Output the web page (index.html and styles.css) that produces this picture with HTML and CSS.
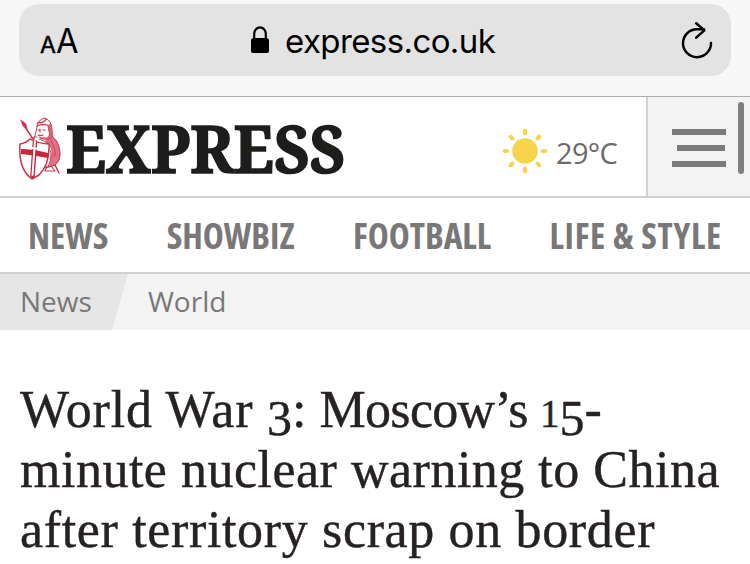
FILE: index.html
```html
<!DOCTYPE html>
<html lang="en">
<head>
<meta charset="utf-8">
<title>Express</title>
<link rel="stylesheet" href="styles.css">
</head>
<body>
<div class="browser">
  <div class="address">
    <span class="reader"><span class="reader-small">A</span><span class="reader-big">A</span></span>
    <div class="site">
      <svg class="lock" width="20" height="28" viewBox="0 0 20 28"><path d="M4.2 14V8a5.8 6.6 0 0 1 11.6 0v6" fill="none" stroke="#000" stroke-width="2.2"/><rect x="1" y="12" width="18" height="15" rx="2.6"/></svg>
      <span class="host">express.co.uk</span>
    </div>
    <svg class="reload" width="34" height="40" viewBox="0 0 34 40" fill="none" stroke="#000" stroke-width="2.5" stroke-linecap="round" stroke-linejoin="round"><path d="M31 23A14 14 0 1 1 17 9.2h7M16.2 3.2l8.2 7.2-8.2 7.2"/></svg>
  </div>
</div>
<header class="header">
  <div class="brand">
    <svg class="crusader" width="42" height="64" viewBox="0 0 42 64" fill="none" stroke="#c8364b" stroke-linecap="round" stroke-linejoin="round">
      <path d="M2 3l5 4 1 5-4-3z" fill="#c8364b" stroke-width=".6"/>
      <path d="M6 10l8 12M34 44l6 12" stroke-width="1.5"/>
      <path d="M18 10q0-7 8-9 7 3 6 10l1 8q6 5 7 12c2 9 0 14-4 17l-9 3-12-28z" fill="#fff" stroke-width="1"/>
      <path d="M27 2q-1 4-9 4M18 9q5-2 11-1l2 11M19 13h2m3 0h2M21 12v3M19 18q3 1 5 0" stroke-width="1.1"/>
      <path d="M29 9l2 8-3 4-8-1 2 2 8 1 4-4-1-8-1-4z" fill="#dc6678" stroke-width=".5"/>
      <path d="M34 20q7 7 7 16 0 8-5 12l-7 2 3-8q3-8-2-15l-3-3z" fill="#dc7484" stroke-width=".8"/>
      <path d="M18 20q-5-1-6 4m8-2 9 4M32 24q5 7 4 15M29 31q5 3 2 12" stroke-width=".9"/>
      <path d="M28 49l-2 5h10l-4-5" stroke-width="1.1"/>
      <path d="M1 27q6-1 10-5 6 4 19 5 1 20-10 31l-7 4Q-1 52 1 27z" fill="#fff" stroke-width="1.5"/>
      <path d="M2 32q12 0 27 4v5Q14 38 2 37z" fill="#c8283f" stroke="none"/>
      <path d="M16 25l-2.500 34" stroke="#c8283f" stroke-width="4.600"/>
      <path d="M16 24l-2.500 34M12 31l8 .8" stroke="#fff" stroke-width="2"/>
    </svg>
    <svg class="wordmark" width="278" height="56" viewBox="0 0 278 56"><text x="-1" y="51" textLength="279" lengthAdjust="spacingAndGlyphs">EXPRESS</text></svg>
  </div>
  <div class="weather">
    <svg width="46" height="46" viewBox="-23 -23 46 46" fill="#f7d44c">
      <circle r="12.8"/>
      <g><ellipse cy="-19" rx="2.2" ry="3.4"/><ellipse cy="19" rx="2.2" ry="3.4"/><ellipse cx="-19" rx="3.4" ry="2"/><ellipse cx="19" rx="3.4" ry="2"/></g>
      <g transform="rotate(45)"><ellipse cy="-19" rx="2.2" ry="3.4"/><ellipse cy="19" rx="2.2" ry="3.4"/><ellipse cx="-19" rx="3.4" ry="2"/><ellipse cx="19" rx="3.4" ry="2"/></g>
    </svg>
    <span class="temp">29°C</span>
  </div>
  <div class="menu"><i class="bar"></i><i class="bar bar-mid"></i><i class="bar"></i></div>
  <div class="scroll"></div>
</header>
<nav class="nav">
  <a>NEWS</a><a>SHOWBIZ</a><a>FOOTBALL</a><a class="wide">LIFE &amp; STYLE</a>
</nav>
<div class="crumbs"><span class="crumb-first">News</span><span class="crumb">World</span></div>
<h1 class="headline">
  <span class="line l1"><span class="lead">World War </span><span class="old">3</span>: <span class="tight">Moscow’s </span><span class="one">1</span><span class="old">5</span>-</span>
  <span class="line l2">minute nuclear warning to China</span>
  <span class="line l3">after territory scrap on border</span>
</h1>
</body>
</html>
```
FILE: styles.css
```css
* { box-sizing: border-box; }
body { margin: 0; width: 750px; height: 564px; overflow: hidden; background: #fff; font-family: "Open Sans", sans-serif; color: #797777; }
.browser { height: 97px; padding: 4px 19px 0; background: #f7f7f7; border-bottom: 1px solid #aeaeae; }
.address { display: flex; align-items: center; height: 72px; padding: 0 17px 0 21px; border-radius: 20px; background: #e3e3e3; color: #000; font-family: Inter, sans-serif; }
.reader { display: flex; align-items: baseline; width: 210px; padding-top: 1px; }
.reader-small { font-size: 23px; -webkit-text-stroke: 0.5px #000; }
.reader-big { font-size: 34px; letter-spacing: -1px; transform: scaleX(0.96); transform-origin: left; }
.site { display: flex; align-items: center; gap: 15px; }
.host { font-size: 33px; letter-spacing: -0.6px; line-height: 44px; padding-top: 1px; }
.reload { margin-left: auto; }
.header { position: relative; display: flex; height: 101px; border-bottom: 2px solid #d1d1d1; }
.brand { display: flex; flex: 1; padding: 20px 0 0 19px; gap: 6px; }
.wordmark { margin-top: 5px; overflow: visible; }
.wordmark text { font-family: "Noto Serif", "Liberation Serif", serif; font-weight: 700; font-size: 66px; fill: #1d1d1b; stroke: #1d1d1b; stroke-width: 1.6px; }
.weather { display: flex; align-items: center; width: 144px; gap: 8px; padding-top: 8px; }
.temp { font-size: 29px; letter-spacing: -0.7px; color: #6c6b6b; padding-top: 4px; }
.menu { display: flex; flex-direction: column; gap: 10px; width: 104px; padding: 32px 0 0 24px; background: #f3f3f3; border-left: 2px solid #d1d1d1; }
.bar { width: 54px; height: 6px; background: #7b7979; }
.bar-mid { width: 48px; margin-left: 5px; }
.scroll { position: absolute; top: 5px; right: 6px; width: 6px; height: 72px; border-radius: 3px; background: #7f7f7f; }
.nav { display: flex; justify-content: space-between; align-items: center; height: 76px; padding: 0 28px 1px; border-bottom: 2px solid #d1d1d1; font-size: 35.5px; font-weight: 700; font-stretch: 75%; }
.wide { letter-spacing: 0.7px; }
.crumbs { display: flex; align-items: center; height: 56px; background: #f3f3f3; font-size: 28px; }
.crumb-first { width: 128px; height: 56px; line-height: 55px; padding-left: 20px; background: #e6e6e6; clip-path: polygon(0 0, 100% 0, 112px 100%, 0 100%); }
.crumb { margin-left: 20px; line-height: 55px; padding-bottom: 1px; }
.headline { margin: 50px 20px 0; font: 400 52px/60px "Liberation Serif", serif; color: #272222; -webkit-text-stroke: 0.4px #272222; }
.line { display: block; width: max-content; white-space: nowrap; }
.l2 { letter-spacing: 0.5px; }
.l3 { letter-spacing: 0.65px; }
.lead { letter-spacing: 0.8px; }
.tight { letter-spacing: -0.7px; }
.old { position: relative; top: 8px; font-size: 50px; line-height: 1; }
.one { display: inline-block; font-size: 39px; line-height: 1; }
```
